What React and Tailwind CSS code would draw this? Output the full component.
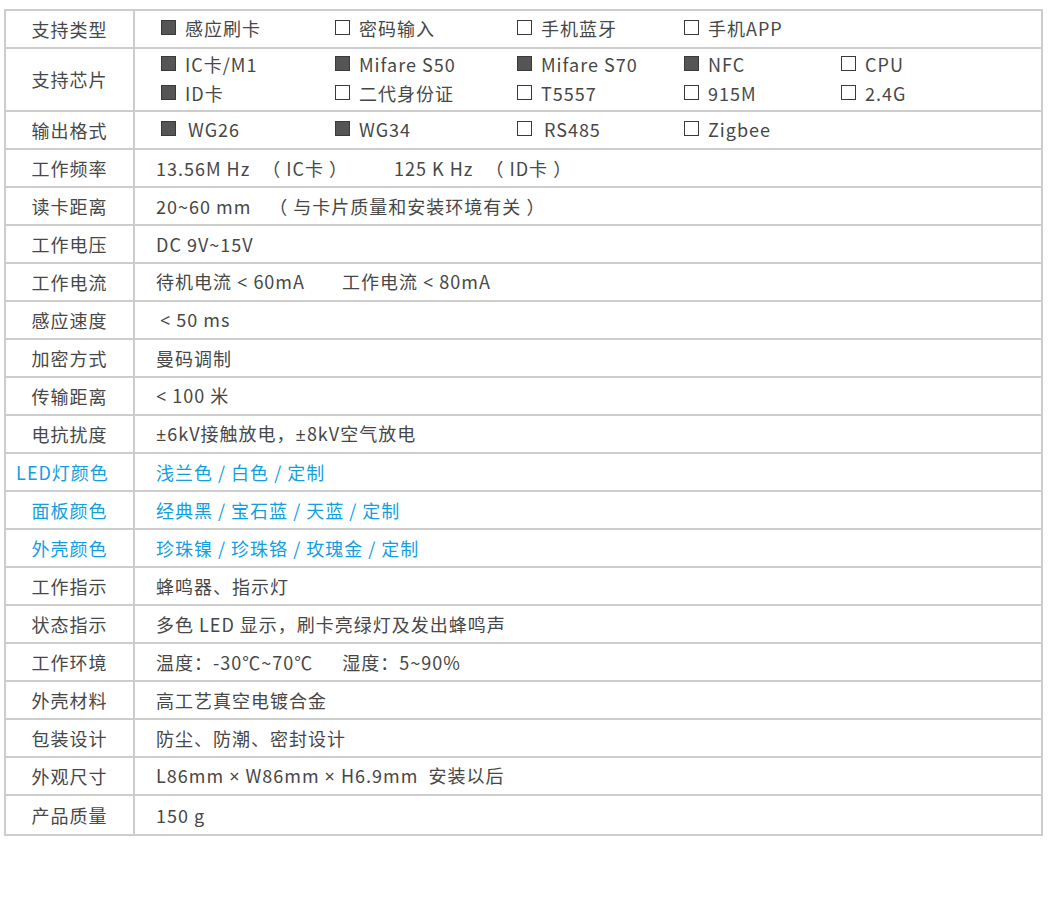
import React from "react";

const FONT = { fontFamily: '"Noto Sans CJK SC", "Noto Sans", sans-serif' };

function Box({ on }) {
  return (
    <span
      className={
        "inline-block w-[15px] h-[15px] mr-[9px] shrink-0 border border-[#3a3a3a] " +
        (on ? "bg-[#555555]" : "bg-white")
      }
    />
  );
}

function Check({ on, label, gap }) {
  return (
    <div className="flex items-center">
      <Box on={on} />
      <span className={gap ? "ml-[3px]" : ""}>{label}</span>
    </div>
  );
}

// narrow latin symbols (±, ×, <) instead of the CJK full-width forms
function N({ children }) {
  return <span className="font-['Noto_Sans']">{children}</span>;
}

const COLS = "grid grid-cols-[174px_182px_167px_157px_auto] pl-[26px]";

const rows = [
  { label: "工作频率", value: (
    <>
      <span>13.56M Hz</span>
      <span className="ml-[12px]">（ IC卡 ）</span>
      <span className="ml-[46px]">125 K Hz</span>
      <span className="ml-[12px]">（ ID卡 ）</span>
    </>
  ) },
  { label: "读卡距离", value: (
    <>
      <span>20~60 mm</span>
      <span className="ml-[18px]">（ 与卡片质量和安装环境有关 ）</span>
    </>
  ) },
  { label: "工作电压", value: "DC 9V~15V" },
  { label: "工作电流", value: (
    <>
      <span>待机电流 <N>&lt;</N> 60mA</span>
      <span className="ml-[37px]">工作电流 <N>&lt;</N> 80mA</span>
    </>
  ) },
  { label: "感应速度", value: <span className="ml-[4px]"><N>&lt;</N> 50 ms</span> },
  { label: "加密方式", value: "曼码调制" },
  { label: "传输距离", value: <><N>&lt;</N> 100 米</> },
  { label: "电抗扰度", value: <><N>±</N>6kV接触放电，<N>±</N>8kV空气放电</> },
  { label: "LED灯颜色", value: "浅兰色 / 白色 / 定制", blue: true, shift: true },
  { label: "面板颜色", value: "经典黑 / 宝石蓝 / 天蓝 / 定制", blue: true },
  { label: "外壳颜色", value: "珍珠镍 / 珍珠铬 / 玫瑰金 / 定制", blue: true },
  { label: "工作指示", value: "蜂鸣器、指示灯" },
  { label: "状态指示", value: "多色 LED 显示，刷卡亮绿灯及发出蜂鸣声" },
  { label: "工作环境", value: (
    <>
      <span>温度：-30℃~70℃</span>
      <span className="ml-[29px]">湿度：5~90%</span>
    </>
  ) },
  { label: "外壳材料", value: "高工艺真空电镀合金" },
  { label: "包装设计", value: "防尘、防潮、密封设计" },
  { label: "外观尺寸", value: <>L86mm <N>×</N> W86mm <N>×</N> H6.9mm  安装以后</> },
  { label: "产品质量", value: "150 g" },
];

function Row({ label, children, h = "h-[38px]", blue, shift, last }) {
  return (
    <div className={"flex " + h + (last ? "" : " border-b-2 border-[#cdcdcd]")}>
      <div
        className={
          "w-[129px] shrink-0 flex items-center justify-center pb-[1px] border-r-2 border-[#cdcdcd] " +
          (blue ? "text-[#129fe0] " : "") +
          (shift ? "pr-[14px]" : "")
        }
      >
        {label}
      </div>
      <div className={"flex-1 flex items-center pb-[1px] " + (blue ? "text-[#129fe0]" : "")}>
        {children}
      </div>
    </div>
  );
}

export default function App() {
  return (
    <div className="w-[1048px] h-[906px] bg-white pt-[9px] pl-[4px]" style={FONT}>
      <div className="w-[1039px] border-2 border-[#cdcdcd] text-[18px] tracking-[1px] text-[#474747] leading-none">
        <Row label="支持类型">
          <div className={COLS + " w-full -mt-[2px]"}>
            <Check on label="感应刷卡" />
            <Check label="密码输入" />
            <Check label="手机蓝牙" />
            <Check label="手机APP" />
          </div>
        </Row>
        <Row label="支持芯片" h="h-[63px]">
          <div className={COLS + " w-full gap-y-[11px] -mt-[2px]"}>
            <Check on label="IC卡/M1" />
            <Check on label="Mifare S50" />
            <Check on label="Mifare S70" />
            <Check on label="NFC" />
            <Check label="CPU" />
            <Check on label="ID卡" />
            <Check label="二代身份证" />
            <Check label="T5557" />
            <Check label="915M" />
            <Check label="2.4G" />
          </div>
        </Row>
        <Row label="输出格式">
          <div className={COLS + " w-full -mt-[2px]"}>
            <Check on label="WG26" gap />
            <Check on label="WG34" />
            <Check label="RS485" gap />
            <Check label="Zigbee" />
          </div>
        </Row>
        {rows.map((r, i) => (
          <Row
            key={r.label}
            label={r.label}
            blue={r.blue}
            shift={r.shift}
            last={i === rows.length - 1}
          >
            <div className="pl-[21px] whitespace-pre">{r.value}</div>
          </Row>
        ))}
      </div>
    </div>
  );
}
